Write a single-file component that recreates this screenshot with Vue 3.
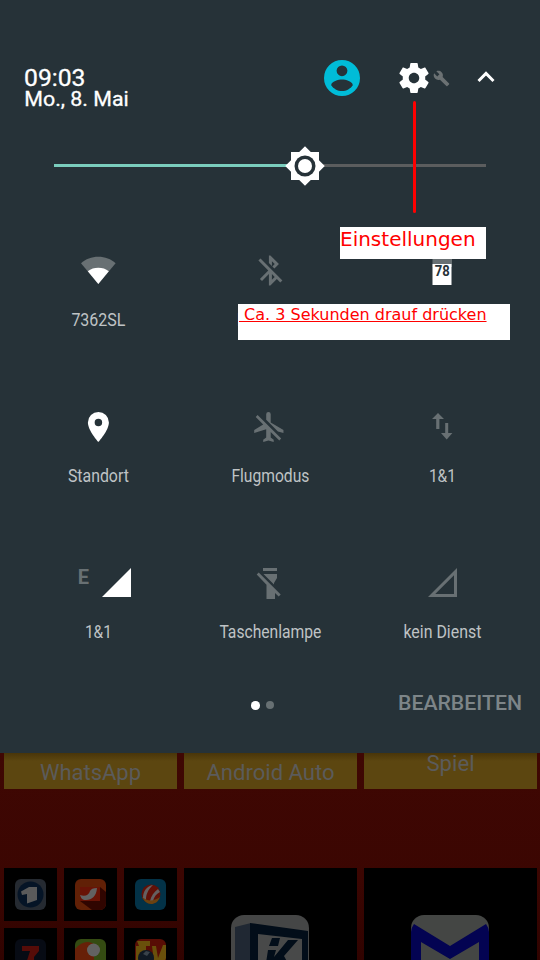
<script setup>
const tiles = [
  { icon: 'wifi', label: '7362SL', width: 54 },
  { icon: 'bluetooth', label: 'Bluetooth', width: 67 },
  { icon: 'battery', label: '', width: 0 },
  { icon: 'location', label: 'Standort', width: 61 },
  { icon: 'airplane', label: 'Flugmodus', width: 78 },
  { icon: 'data', label: '1&1', width: 27 },
  { icon: 'signal', label: '1&1', width: 27 },
  { icon: 'torch', label: 'Taschenlampe', width: 102 },
  { icon: 'nosignal', label: 'kein Dienst', width: 78 },
]
const captions = [
  { text: 'WhatsApp', width: 101, y: 27 },
  { text: 'Android Auto', width: 128, y: 27 },
  { text: 'Spiel', width: 48, y: 18 },
]
</script>

<template>
  <main class="screen">
    <section class="panel">
      <header class="header">
        <div class="clock">
          <svg width="120" height="48">
            <text x="0" y="24" class="time" textLength="61.500" lengthAdjust="spacingAndGlyphs">09:03</text>
            <text x="0.300" y="44" class="date" textLength="104.500" lengthAdjust="spacingAndGlyphs">Mo., 8. Mai</text>
          </svg>
        </div>
        <svg class="user" viewBox="2 2 20 20"><path fill="#00bcd8" fill-rule="evenodd" d="M12 2a10 10 0 1 0 0 20 10 10 0 0 0 0-20zm0 3a3 3 0 1 1 0 6 3 3 0 0 1 0-6zm0 14.2c-2.5 0-4.7-1.28-6-3.22.03-1.99 4-3.08 6-3.08s5.97 1.09 6 3.08c-1.3 1.94-3.5 3.22-6 3.22z" /></svg>
        <svg class="gear" viewBox="0 0 24 24"><path fill="#fff" d="M19.43 12.98c.04-.32.07-.64.07-.98s-.03-.66-.07-.98l2.11-1.65c.19-.15.24-.42.12-.64l-2-3.46c-.12-.22-.39-.3-.61-.22l-2.49 1c-.52-.4-1.08-.73-1.69-.98l-.38-2.65C14.46 2.18 14.25 2 14 2h-4c-.25 0-.46.18-.49.42l-.38 2.65c-.61.25-1.17.59-1.69.98l-2.49-1c-.23-.09-.49 0-.61.22l-2 3.46c-.13.22-.07.49.12.64l2.11 1.65c-.04.32-.07.65-.07.98s.03.66.07.98l-2.11 1.65c-.19.15-.24.42-.12.64l2 3.46c.12.22.39.3.61.22l2.49-1c.52.4 1.08.73 1.69.98l.38 2.65c.03.24.24.42.49.42h4c.25 0 .46-.18.49-.42l.38-2.65c.61-.25 1.17-.59 1.69-.98l2.49 1c.23.09.49 0 .61-.22l2-3.46c.12-.22.07-.49-.12-.64l-2.11-1.65zM12 15.5c-1.93 0-3.5-1.57-3.5-3.5s1.57-3.5 3.5-3.5 3.5 1.57 3.5 3.5-1.57 3.5-3.5 3.5z" /></svg>
        <svg class="wrench" viewBox="0 0 24 24"><path fill="#6b7173" d="M22.7 19l-9.1-9.1c.9-2.3.4-5-1.5-6.9-2-2-5-2.4-7.4-1.3L9 6 6 9 1.600 4.700C.4 7.100.9 10.100 2.900 12.100c1.900 1.900 4.600 2.400 6.900 1.500l9.100 9.100c.4.400 1 .400 1.400 0l2.300-2.300c.5-.400.5-1.100.1-1.400z" /></svg>
        <svg class="chevron" viewBox="0 0 18 12"><path d="M1.500 10 9 2.400l7.500 7.600" fill="none" stroke="#fff" stroke-width="2.900" /></svg>
      </header>

      <div class="slider">
        <div class="filled"></div>
        <svg class="sun" viewBox="0 0 24 24"><path fill="#fff" d="M20 8.690V4h-4.690L12 .690 8.690 4H4v4.690L.690 12 4 15.310V20h4.690L12 23.310 15.310 20H20v-4.690L23.310 12z" /><circle cx="12" cy="12" r="6" fill="#263238" /><circle cx="12" cy="12" r="4" fill="#fff" /></svg>
        <div class="rest"></div>
      </div>

      <div class="tiles">
        <div v-for="(t, i) in tiles" :key="i" class="tile">
          <svg class="icon" width="72" height="36" viewBox="-18 0 72 36" fill="#687073">
            <template v-if="t.icon === 'wifi'">
              <path d="M1 10.200C5.600 6 11.600 3.800 18.300 3.800s12.700 2.200 17.300 6.400L18.300 31z" />
              <path fill="#fff" d="M7.800 18.200Q12.300 14.800 18.300 14.800t10.500 3.400L18.300 31z" />
            </template>
            <g v-else-if="t.icon === 'bluetooth'" transform="translate(.4 -.5) scale(1.5)"><path d="M13 5.830l1.880 1.880-1.600 1.600 1.410 1.410 3.020-3.020L12 2h-1v5.030l2 2V5.830zM5.410 4 4 5.410 10.590 12 5 17.590 6.410 19 11 14.410V22h1l4.290-4.290 2.300 2.290L20 18.590 5.410 4zM13 18.170v-3.760l1.880 1.880L13 18.170z" /></g>
            <template v-else-if="t.icon === 'battery'">
              <rect x="8.500" y="4" width="19.500" height="10" /><rect x="8.500" y="11" width="19" height="21" fill="#fff" />
              <text x="10.800" y="23.300" class="percent" textLength="15" lengthAdjust="spacingAndGlyphs">78</text>
            </template>
            <path v-else-if="t.icon === 'location'" transform="translate(.4 0)" fill="#fff" fill-rule="evenodd" d="M18 3A10.500 10.500 0 0 0 7.500 13.500C7.500 21.400 18 33 18 33s10.500-11.600 10.500-19.500A10.500 10.500 0 0 0 18 3zm0 6.750a3.750 3.750 0 1 1 0 7.500 3.750 3.750 0 0 1 0-7.500z" />
            <g v-else-if="t.icon === 'airplane'" transform="translate(-.8 0) scale(1.5)">
              <path d="M13 9V3.500a1.500 1.500 0 0 0-3 0v3.680l7.830 7.830L21.500 16v-2L13 9zM3 5.270l4.990 4.990L2 14v2l8-2.500V19l-2 1.500V22l3.500-1 3.500 1v-1.500L13 19v-3.730L18.730 21 20 19.730 4.270 4z" />
            </g>
            <path v-else-if="t.icon === 'data'" d="M14 4 8 10h4.200v10h3.200V10H20zM21.200 14v10H17l5.700 6.500L28.400 24h-4.200V14z" />
            <template v-else-if="t.icon === 'signal'">
              <text x="-2.300" y="19" class="edge">E</text><path fill="#fff" d="M51 3v29H22z" />
            </template>
            <path v-else-if="t.icon === 'torch'" d="M11 3h14v3H11zM11.500 9H25v4l-3 5v1.500zM6.700 7.500 28.700 29.500l-2 2-3.700-3.500V34h-8.500V19.800L4.700 9.500z" />
            <path v-else fill-rule="evenodd" d="M33 3v29H4zM30 10.200 11.200 29H30z" />
          </svg>
          <svg class="label" width="140" height="24">
            <text v-if="t.label" x="70.400" y="17.500" text-anchor="middle" :textLength="t.width" lengthAdjust="spacingAndGlyphs">{{ t.label }}</text>
          </svg>
        </div>
      </div>

      <footer class="footer">
        <div class="dots"><i class="dot active"></i><i class="dot"></i></div>
        <svg class="edit" width="124" height="26"><text x="0" y="20" textLength="124" lengthAdjust="spacingAndGlyphs">BEARBEITEN</text></svg>
      </footer>

      <div class="pointer"></div>
      <div class="note note-settings">Einstellungen</div>
      <div class="note note-press"><u>&nbsp;Ca. 3 Sekunden drauf drücken</u></div>
    </section>

    <section class="home">
      <div class="captions">
        <div v-for="c in captions" :key="c.text" class="caption">
          <svg width="173" height="36"><text x="86.500" :y="c.y" text-anchor="middle" :textLength="c.width" lengthAdjust="spacingAndGlyphs">{{ c.text }}</text></svg>
        </div>
      </div>
      <div class="apps">
        <div class="folder">
          <div class="app"><svg viewBox="0 0 31 31"><rect width="31" height="31" rx="6" fill="#252a31" /><circle cx="15.500" cy="15.500" r="13" fill="#051426" /><path d="M6 12.500 14 8h8v13l-10 3.500V15l-5 1z" fill="#5a5a5a" /></svg></div>
          <div class="app"><svg viewBox="0 0 31 31"><rect width="31" height="31" rx="6" fill="#612006" /><path d="M5 22l12 9h8a6 6 0 0 0 6-6V13l-6-5z" fill="#300500" /><path d="M5 8h20v14H5z" fill="#681306" /><path d="M5 16c5 2 9 0 10-4 1-2 3-3 7-3-.5 8-5 12-11 12-4 0-5-2-6-5z" fill="#626262" /></svg></div>
          <div class="app"><svg viewBox="0 0 31 31"><rect width="31" height="31" rx="6" fill="#033247" /><circle cx="16" cy="15" r="9.500" fill="#611007" /><path d="M8 19C8 12 12 7 18 6c-5 5-7 9-7 15zm7 3c1-5 4-9 8-12l2 3c-4 2-6 5-7 9z" fill="#656060" /><path d="M7 18c5 4 11 5 18 0-2 5-5 7-9 7s-7-3-9-7z" fill="#6b4210" /></svg></div>
          <div class="app"><svg viewBox="0 0 31 31"><rect width="31" height="31" rx="6" fill="#070b14" /><path d="M7 7h17v5l-5 6v13H9l6-19H7z" fill="#560c08" /></svg></div>
          <div class="app"><svg viewBox="0 0 31 31"><rect width="31" height="31" rx="6" fill="#344b12" /><path d="M0 10C6 3 13 1 19 5v26H0z" fill="#672008" /><circle cx="18.500" cy="11" r="6.500" fill="#626262" /></svg></div>
          <div class="app"><svg viewBox="0 0 31 31"><rect width="31" height="31" rx="6" fill="#580d05" /><path d="M2 2h13v5h-4v24H1V7h3zM17 7h4l2 12 5-13h3v13l-5 12h-6z" fill="#69500b" /><circle cx="11" cy="19" r="8" fill="#101923" /><path d="M8 15l3-3 4 1-3 4z" fill="#39424a" /></svg></div>
        </div>
        <div class="large">
          <svg viewBox="0 0 78 78"><rect width="78" height="78" rx="13" fill="#454646" /><path d="M4 12l16-4v70H4z" fill="#202833" /><path d="M19 8l58 8v62H19z" fill="#020d19" /><path d="M27 19l44 5v54H27z" fill="#484949" /><path d="M41 23h8l-2 8h-9zM37 35h8l-2 7 14-17h10L53 41l11 20H52l-8-15-3 15h-8z" fill="#020d19" /></svg>
        </div>
        <div class="large">
          <svg viewBox="0 0 78 78"><rect width="78" height="78" rx="13" fill="#444644" /><path d="M3 9l36 22L75 9q3 4 3 8v61H68V27L39 44 10 27v51H0V17q0-4 3-8z" fill="#030352" /></svg>
        </div>
      </div>
    </section>
  </main>
</template>

<style>
body { margin: 0; overflow: hidden; }
</style>
<style scoped>
* { box-sizing: border-box; }
svg { display: block; flex-shrink: 0; }
.screen { width: 540px; height: 960px; overflow: hidden; background: #390602; font-family: Roboto, sans-serif; }
.panel { position: relative; height: 753px; background: #263238; }
.header { height: 144px; padding: 62px 45px 0 24px; display: flex; align-items: flex-start; }
.clock { width: 300px; }
.clock text { fill: #fff; stroke: #fff; stroke-width: .3px; }
.clock .time { font-size: 24px; }
.clock .date { font-size: 21px; }
.user { width: 36px; height: 36px; margin-top: -2px; }
.gear { width: 36px; height: 36px; margin: -2px 0 0 36px; }
.wrench { width: 17px; height: 17px; margin: 7.500px 0 0 .5px; }
.chevron { width: 18px; height: 12px; margin: 9px 0 0 27.500px; }
.slider { height: 43px; padding: 0 54px; display: flex; align-items: center; }
.filled { width: 251px; height: 3px; background: #7acdbd; }
.sun { width: 42px; height: 42px; margin: 0 -21px; z-index: 1; }
.rest { flex: 1; height: 3px; background: #5b5d5e; }
.tiles { height: 486px; padding: 66px 12px 0; display: grid; grid-template-columns: repeat(3, 172px); grid-auto-rows: 156px; }
.tile { display: flex; flex-direction: column; align-items: center; }
.label { margin-top: 19px; }
.label text { fill: #bfc3c5; font-size: 18px; }
.percent { fill: #263238; font-size: 15px; font-weight: 700; }
.edge { font-size: 20px; font-weight: 700; }
.footer { height: 80px; padding: 17px 18px 0 251px; display: flex; justify-content: space-between; }
.dots { display: flex; align-items: flex-start; gap: 6px; padding-top: 11px; }
.dot { width: 8px; height: 8px; border-radius: 50%; background: #677073; }
.dot.active { width: 8.500px; height: 8.500px; background: #fff; }
.edit text { fill: #7d8588; font-size: 21px; font-weight: 500; }
.pointer { position: absolute; left: 413px; top: 101px; width: 3px; height: 112px; background: #f00; border-radius: 2px; }
.note { position: absolute; background: #fff; color: #f00; font-family: "DejaVu Sans", sans-serif; white-space: nowrap; }
.note-settings { left: 340px; top: 227px; width: 146px; height: 32px; font-size: 20px; line-height: 24px; }
.note-press { left: 238px; top: 304px; width: 272px; height: 36px; padding-left: 1px; font-size: 16px; line-height: 22px; }
.home { height: 207px; background: linear-gradient(#3f0703, #3b0602 60%, #300300); }
.captions { display: flex; gap: 7px; padding-left: 4px; }
.caption { width: 173px; height: 36px; background: linear-gradient(#493509, #5c4610 8px, #5c4610); }
.caption text { fill: #5b5b5b; font-size: 22px; }
.apps { display: flex; gap: 7px; padding: 79px 0 0 4px; }
.folder { width: 173px; display: grid; grid-template-columns: repeat(3, 53px); grid-auto-rows: 53px; gap: 7px; }
.app { background: #000; padding: 11px; }
.app svg { width: 31px; height: 31px; }
.large { width: 173px; height: 173px; padding: 47px; background: #000; }
.large svg { width: 78px; height: 78px; }
</style>
